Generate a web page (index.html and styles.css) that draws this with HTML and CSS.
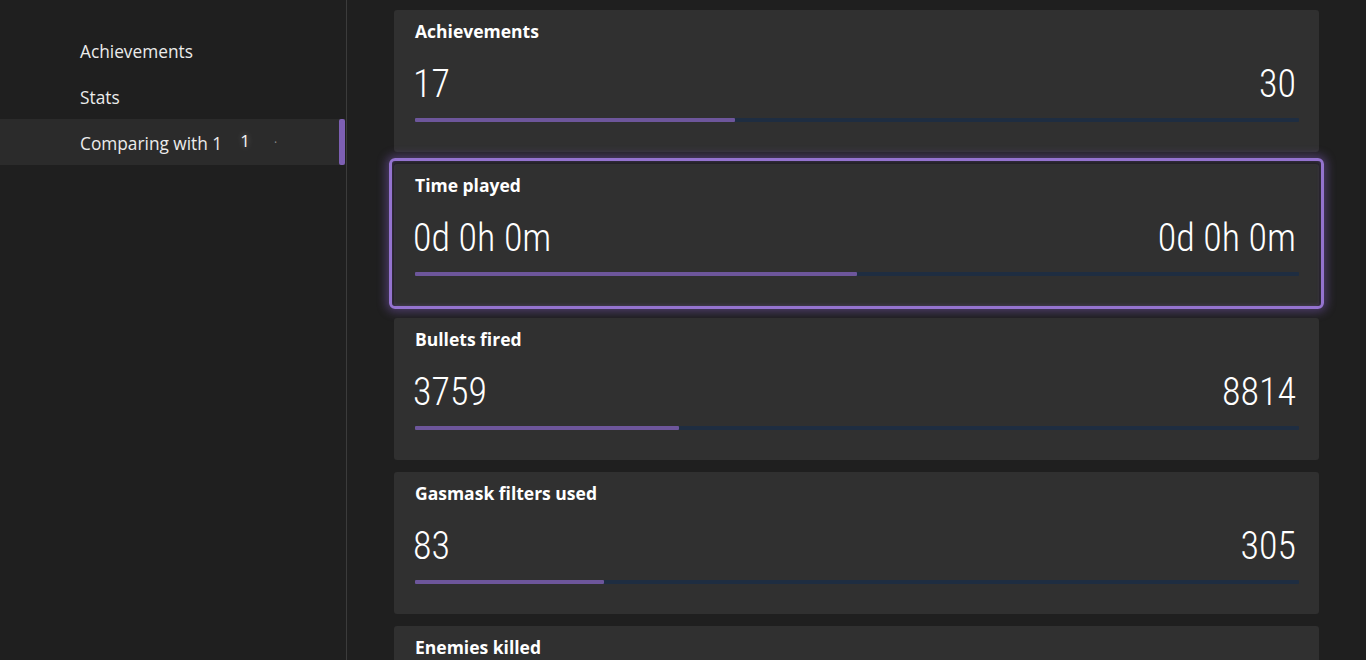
FILE: index.html
```html
<!DOCTYPE html>
<html>
<head>
<meta charset="utf-8">
<link rel="stylesheet" href="styles.css">
</head>
<body>
<div class="app">
  <nav class="sidebar">
    <div class="nav-item">Achievements</div>
    <div class="nav-item">Stats</div>
    <div class="nav-item selected">Comparing with 1<span class="blur-name">1</span><span class="blur-dot">·</span></div>
  </nav>
  <main class="main">
    <section class="card">
      <div class="card-title">Achievements</div>
      <div class="values"><span>17</span><span>30</span></div>
      <div class="bar"><div class="bar-fill" style="width:36.17%"></div></div>
    </section>
    <section class="card focused">
      <div class="card-title">Time played</div>
      <div class="values"><span>0d 0h 0m</span><span>0d 0h 0m</span></div>
      <div class="bar"><div class="bar-fill" style="width:50%"></div></div>
    </section>
    <section class="card">
      <div class="card-title">Bullets fired</div>
      <div class="values"><span>3759</span><span>8814</span></div>
      <div class="bar"><div class="bar-fill" style="width:29.9%"></div></div>
    </section>
    <section class="card">
      <div class="card-title">Gasmask filters used</div>
      <div class="values"><span>83</span><span>305</span></div>
      <div class="bar"><div class="bar-fill" style="width:21.39%"></div></div>
    </section>
    <section class="card">
      <div class="card-title">Enemies killed</div>
    </section>
  </main>
</div>
</body>
</html>
```

FILE: styles.css
```css
html, body {
  margin: 0;
  padding: 0;
  height: 100%;
  overflow: hidden;
  background: #1f1f1f;
  font-family: "Open Sans", "Noto Sans", sans-serif;
  color: #fff;
}

.app {
  display: flex;
  height: 660px;
  overflow: hidden;
}

.sidebar {
  width: 346px;
  flex: none;
  border-right: 1px solid #3b3b3b;
  padding-top: 27px;
  box-sizing: content-box;
}

.nav-item {
  position: relative;
  height: 46px;
  line-height: 44px;
  padding-top: 3px;
  box-sizing: border-box;
  padding-left: 80px;
  font-size: 17.3px;
  color: #ececec;
  margin-right: 1px;
}

.nav-item.selected {
  background: #2b2b2b;
}

.nav-item.selected::after {
  content: "";
  position: absolute;
  right: 0;
  top: 0;
  width: 6px;
  height: 46px;
  border-radius: 2px;
  background: #7d5fb3;
}

.blur-name {
  margin-left: 18px;
  font-size: 17px;
  color: #f2f2f2;
  position: relative;
  top: -3px;
  text-shadow: 0 0 6px rgba(255,255,255,0.35);
}

.blur-dot {
  margin-left: 24px;
  color: #8a8a8a;
  font-size: 12px;
  position: relative;
  top: -3px;
}

.main {
  flex: 1;
  padding: 10px 47px 0 47px;
  display: flex;
  flex-direction: column;
  gap: 12px;
}

.card {
  position: relative;
  flex: none;
  height: 142px;
  box-sizing: border-box;
  background: #303030;
  border-radius: 3px;
  padding: 9px 20px 30px 21px;
}

.card.focused::before {
  content: "";
  position: absolute;
  top: -6px;
  left: -5px;
  right: -5px;
  bottom: -3px;
  border: 3px solid #9473cf;
  border-radius: 6px;
  box-shadow: 0 0 10px 3px rgba(140, 100, 210, 0.4), inset 0 0 4px rgba(140, 100, 210, 0.35);
  pointer-events: none;
}

.card-title {
  font-size: 17.5px;
  font-weight: 700;
  line-height: 24px;
  height: 24px;
}

.values {
  display: flex;
  justify-content: space-between;
  margin-top: 19px;
  margin-left: -2px;
  height: 44px;
  line-height: 44px;
  font-family: "Liberation Sans Narrow", "Roboto Condensed", "DejaVu Sans Condensed", "Liberation Sans", sans-serif;
  font-size: 38px;
  font-weight: 300;
  padding-right: 3px;
}

.bar {
  margin-top: 12px;
  height: 4px;
  background: #1e2d41;
  border-radius: 1px;
  display: flex;
}

.bar-fill {
  height: 4px;
  background: #6d569b;
  border-radius: 1px;
}
```
